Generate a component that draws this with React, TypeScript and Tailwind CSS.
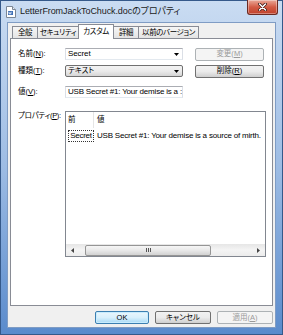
import React from 'react';

const FONT = "font-['Liberation_Sans','Noto_Sans_CJK_JP',sans-serif] [font-feature-settings:'palt']";

const DownArrow = () => (
  <svg width="5" height="3" viewBox="0 0 5 3" className="shrink-0">
    <path d="M0 0h5L2.5 3z" fill="#000" />
  </svg>
);

type BtnProps = { children: React.ReactNode; className?: string; disabled?: boolean; isDefault?: boolean };

const Button = ({ children, className = '', disabled, isDefault }: BtnProps) => {
  let look = 'border-[#707070] bg-gradient-to-b from-[#f2f2f2] via-[#ebebeb] to-[#cfcfcf] text-black';
  if (disabled) look = 'border-[#adb2b5] bg-[#f4f4f4] text-[#9a9a9a]';
  if (isDefault) look = 'border-[#3c7fb1] bg-gradient-to-b from-[#eaf6fd] via-[#d9f0fc] to-[#a7d9f5] text-black shadow-[inset_0_0_0_1px_#c9ecfd]';
  return (
    <div className={`h-[13px] shrink-0 flex items-center justify-center rounded-[2px] border text-[7.5px] leading-none whitespace-nowrap ${look} ${className}`}>
      {children}
    </div>
  );
};

const Tab = ({ label, className = '', selected }: { label: string; className?: string; selected?: boolean }) => (
  <div
    className={
      selected
        ? `h-[15px] -ml-px relative z-10 flex items-center justify-center bg-white border border-b-0 border-[#898c95] text-[7.5px] leading-none pb-[1px] whitespace-nowrap tracking-[-0.4px] ${className}`
        : `h-[13px] flex items-center justify-center bg-gradient-to-b from-[#f6f6f6] to-[#e2e2e2] border border-b-0 border-[#898c95] text-[7.5px] leading-none whitespace-nowrap tracking-[-0.4px] ${className}`
    }
  >
    {label}
  </div>
);

export default function App() {
  return (
    <div className={`w-[283px] h-[335px] flex flex-col bg-gradient-to-b from-[#cadcf2] via-[#9dbce4] to-[#5a8bcc] border border-[#35598a] ${FONT}`}>
      {/* title bar */}
      <div className="h-[21px] shrink-0 flex items-start">
        <svg width="10" height="12" viewBox="0 0 10 12" className="ml-[5px] mt-[5px] shrink-0">
          <path d="M0.5 0.5h6l3 3v8h-9z" fill="#fff" stroke="#7b8796" />
          <path d="M6.5 0.5v3h3" fill="#e6ebf1" stroke="#7b8796" />
          <rect x="2" y="5" width="5" height="4" fill="#3f6fb5" />
          <path d="M2.6 5.8l0.7 2.4 0.7-1.8 0.7 1.8 0.7-2.4" fill="none" stroke="#fff" strokeWidth="0.6" />
        </svg>
        <div className="ml-[4px] mt-[4px] text-[9px] leading-[12px] tracking-[-0.1px] text-[#1b1b1b] whitespace-nowrap">
          LetterFromJackToChuck.docのプロパティ
        </div>
        <div className="ml-auto mr-[4px] -mt-px w-[31px] h-[15px] rounded-b-[3px] border border-t-0 border-[#6b2a22] bg-gradient-to-b from-[#e9a899] via-[#d35b45] to-[#c0412b] flex items-center justify-center shadow-[inset_0_0_0_1px_rgba(255,255,255,0.35)]">
          <svg width="9" height="8" viewBox="0 0 9 8">
            <path d="M1.5 1l6 6M7.5 1l-6 6" stroke="#3a1410" strokeWidth="3" strokeLinecap="round" />
            <path d="M1.5 1l6 6M7.5 1l-6 6" stroke="#fff" strokeWidth="1.6" strokeLinecap="round" />
          </svg>
        </div>
      </div>

      {/* dialog body */}
      <div className="flex-1 mx-[6px] mb-[6px] bg-[#f0f0f0] border border-[#7f9cc4] flex flex-col px-[2px] pt-[1px]">
        {/* tabs */}
        <div className="h-[15px] ml-[2px] -mb-px flex items-end shrink-0">
          <Tab label="全般" className="w-[26px]" />
          <Tab label="セキュリティ" className="w-[42px] -ml-px" />
          <Tab label="カスタム" className="w-[36px]" selected />
          <Tab label="詳細" className="w-[26px] -ml-px" />
          <Tab label="以前のバージョン" className="w-[61px] -ml-px" />
        </div>

        {/* tab page */}
        <div className="h-[268px] shrink-0 bg-white border border-[#898c95] pl-[7px] pt-[9px] flex flex-col text-[7.5px] leading-none">
          <div className="flex items-center h-[12px]">
            <div className="w-[47px] whitespace-nowrap">名前(<u>N</u>):</div>
            <div className="w-[118px] h-[12px] border border-[#abadb3] border-b-[#e3e9ef] border-x-[#dbdfe6] bg-white flex items-center pl-[2px] pr-[3px] text-[8px]">
              <span className="flex-1 tracking-[-0.1px]">Secret</span>
              <DownArrow />
            </div>
            <Button className="w-[69px] ml-[12px]" disabled>変更(<u>M</u>)</Button>
          </div>

          <div className="flex items-center h-[12px] mt-[5px]">
            <div className="w-[47px] whitespace-nowrap">種類(<u>T</u>):</div>
            <div className="w-[118px] h-[12px] rounded-[2px] border border-[#707070] bg-gradient-to-b from-[#f2f2f2] via-[#ebebeb] to-[#d5d5d5] flex items-center pl-[2px] pr-[3px]">
              <span className="flex-1">テキスト</span>
              <DownArrow />
            </div>
            <Button className="w-[69px] ml-[12px]">削除(<u>R</u>)</Button>
          </div>

          <div className="flex items-center h-[12px] mt-[9px]">
            <div className="w-[47px] whitespace-nowrap">値(<u>V</u>):</div>
            <div className="w-[118px] h-[12px] border border-[#abadb3] border-b-[#e3e9ef] border-x-[#dbdfe6] bg-white flex items-center pl-[2px] overflow-hidden whitespace-nowrap text-[8px]">
              <span className="tracking-[-0.2px]">USB Secret #1: Your demise is a :</span>
            </div>
          </div>

          <div className="flex items-start mt-[13px]">
            <div className="w-[47px] pt-[1px] whitespace-nowrap tracking-[-0.3px]">プロパティ(<u>P</u>):</div>
            <div className="w-[201px] h-[146px] border border-[#828790] bg-white flex flex-col">
              {/* header */}
              <div className="h-[16px] flex items-stretch shrink-0">
                <div className="w-[28px] border-r border-[#e5e5e5] flex items-center pl-[2px]">前</div>
                <div className="flex-1 flex items-center pl-[3px]">値</div>
              </div>
              {/* row */}
              <div className="mt-[2px] h-[12px] flex items-center whitespace-nowrap text-[8px]">
                <div className="ml-[2px] h-[12px] w-[26px] border border-dotted border-[#333] flex items-center justify-center tracking-[-0.3px]">Secret</div>
                <div className="ml-[3px] tracking-[-0.2px]">USB Secret #1: Your demise is a source of mirth.</div>
              </div>
              {/* horizontal scrollbar */}
              <div className="mt-auto h-[12px] flex items-center bg-gradient-to-b from-[#e6e6e6] via-[#f4f4f4] to-[#ececec]">
                <div className="w-[13px] h-full flex items-center justify-center">
                  <svg width="3" height="5" viewBox="0 0 3 5"><path d="M3 0v5L0 2.5z" fill="#444" /></svg>
                </div>
                <div className="ml-[6px] w-[126px] h-[11px] rounded-[2px] border border-[#959595] bg-gradient-to-b from-[#f6f6f6] via-[#e8e8e8] to-[#d2d2d2] flex items-center justify-center gap-[1px]">
                  <div className="w-px h-[4px] bg-[#555]" />
                  <div className="w-px h-[4px] bg-[#555]" />
                  <div className="w-px h-[4px] bg-[#555]" />
                </div>
                <div className="flex-1" />
                <div className="w-[13px] h-full flex items-center justify-center">
                  <svg width="3" height="5" viewBox="0 0 3 5"><path d="M0 0v5L3 2.5z" fill="#444" /></svg>
                </div>
              </div>
            </div>
          </div>
        </div>

        {/* bottom buttons */}
        <div className="mt-[5px] flex justify-end gap-[6px]">
          <Button className="w-[54px]" isDefault>OK</Button>
          <Button className="w-[56px]">キャンセル</Button>
          <Button className="w-[56px]" disabled>適用(<u>A</u>)</Button>
        </div>
      </div>
    </div>
  );
}
